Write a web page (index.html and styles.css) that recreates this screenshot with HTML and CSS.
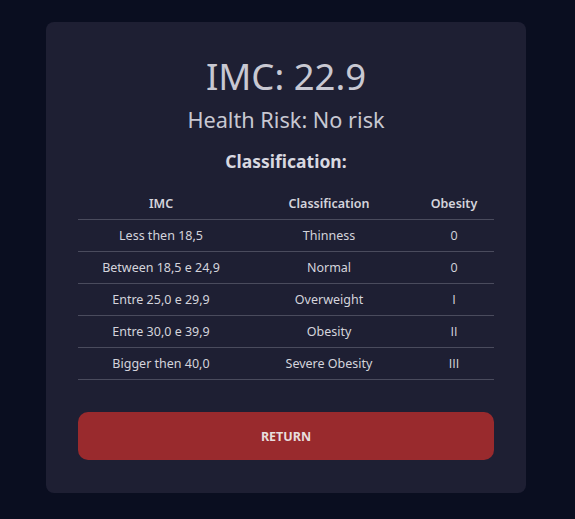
FILE: index.html
```html
<!DOCTYPE html>
<html>
<head>
<meta charset="utf-8">
<link rel="stylesheet" href="styles.css">
</head>
<body>
<div class="card">
  <h1 class="title">IMC: 22.9</h1>
  <h2 class="risk">Health Risk: No risk</h2>
  <h3 class="subtitle">Classification:</h3>
  <table class="table">
    <colgroup>
      <col class="col-imc">
      <col class="col-class">
      <col class="col-ob">
    </colgroup>
    <thead>
      <tr><th>IMC</th><th>Classification</th><th>Obesity</th></tr>
    </thead>
    <tbody>
      <tr><td>Less then 18,5</td><td>Thinness</td><td class="ob">0</td></tr>
      <tr><td>Between 18,5 e 24,9</td><td>Normal</td><td class="ob">0</td></tr>
      <tr><td>Entre 25,0 e 29,9</td><td>Overweight</td><td class="ob">I</td></tr>
      <tr><td>Entre 30,0 e 39,9</td><td>Obesity</td><td class="ob">II</td></tr>
      <tr><td>Bigger then 40,0</td><td>Severe Obesity</td><td class="ob">III</td></tr>
    </tbody>
  </table>
  <button class="btn">RETURN</button>
</div>
</body>
</html>
```
FILE: styles.css
```css
html, body {
  margin: 0;
  padding: 0;
}
body {
  background: #0a0e20;
  font-family: "Noto Sans", sans-serif;
  color: #d4d4dc;
  padding: 22px 49px 27px 46px;
}
.card {
  background: #1e1f33;
  border-radius: 8px;
  padding: 30px 32px 33px;
  text-align: center;
}
.title {
  font-size: 36.5px;
  font-weight: 400;
  line-height: 48px;
  margin: 0;
  color: #c8c8d2;
}
.risk {
  font-size: 21.7px;
  font-weight: 400;
  line-height: 30px;
  margin: 5px 0 0;
  color: #c8c8d2;
}
.subtitle {
  font-size: 17.5px;
  font-weight: 700;
  line-height: 24px;
  margin: 14px 0 0;
  color: #d8d8e0;
}
.table {
  width: 100%;
  border-collapse: collapse;
  table-layout: fixed;
  margin-top: 15px;
  font-size: 12.5px;
}
.col-imc { width: 166px; }
.col-class { width: 170px; }
.col-ob { width: 80px; }
.table th, .table td {
  height: 31px;
  padding: 0;
  border-bottom: 1px solid #4a4b5d;
  vertical-align: middle;
}
.table th {
  font-weight: 600;
}
.ob {
  font-family: "Open Sans", sans-serif;
}
.btn {
  display: block;
  width: 100%;
  height: 48px;
  margin-top: 32px;
  border: none;
  border-radius: 10px;
  background: #992a2d;
  color: #e8dede;
  font-family: inherit;
  font-weight: 700;
  font-size: 12.5px;
}
```
